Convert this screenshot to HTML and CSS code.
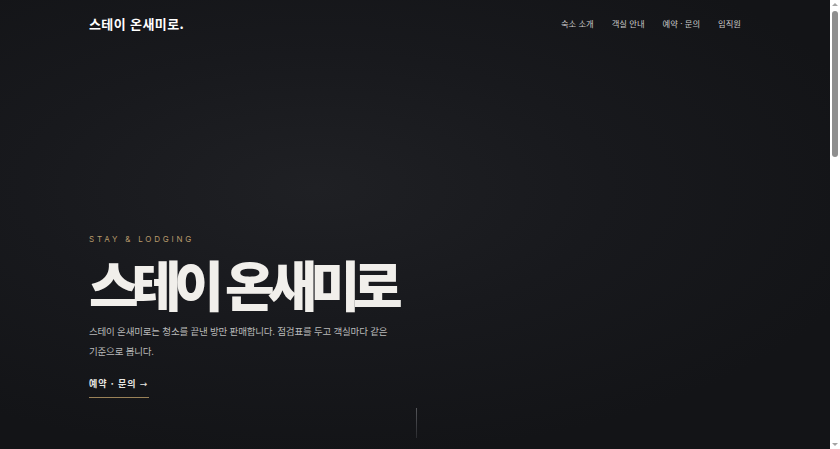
FILE: index.html
```html
<!DOCTYPE html>
<html lang="ko">
<head>
<meta charset="utf-8">
<title>스테이 온새미로</title>
<link rel="stylesheet" href="styles.css">
</head>
<body>
<div class="frame">
<main class="page">
<section class="hero">
  <header class="header">
    <a class="logo" href="#">스테이 온새미로.</a>
    <nav class="nav">
      <a href="#">숙소 소개</a>
      <a href="#">객실 안내</a>
      <a href="#">예약 · 문의</a>
      <a href="#">임직원</a>
    </nav>
  </header>
  <div class="hero-body">
    <p class="eyebrow">STAY &amp; LODGING</p>
    <h1 class="title">스테이 온새미로</h1>
    <p class="lead">스테이 온새미로는 청소를 끝낸 방만 판매합니다. 점검표를 두고 객실마다 같은<br>기준으로 봅니다.</p>
    <a class="cta" href="#">예약 · 문의 <span class="arrow">→</span></a>
  </div>
  <div class="scroll-line"></div>
</section>
<section class="more"></section>
</main>
<div class="scrollbar" aria-hidden="true">
  <span class="sb-arrow sb-up"></span>
  <span class="sb-track"><span class="sb-thumb"></span></span>
  <span class="sb-arrow sb-down"></span>
</div>
</div>
</body>
</html>
```
FILE: styles.css
```css
html, body {
  margin: 0;
  padding: 0;
  height: 100%;
  overflow: hidden;
  background: #141519;
}
body {
  font-family: "Noto Sans CJK KR", "Noto Sans", sans-serif;
  color: #f2f0ec;
}
a { text-decoration: none; color: inherit; }

.frame {
  display: flex;
  height: 100vh;
}
.page {
  flex: 1;
  height: 100vh;
  overflow: hidden;
}
.hero {
  position: relative;
  height: 449px;
  box-sizing: border-box;
  padding: 0 89px;
  display: flex;
  flex-direction: column;
  background: radial-gradient(ellipse 70% 60% at 38% 42%, #1f2024 0%, #18191d 50%, #131417 100%);
}
.header {
  display: flex;
  justify-content: space-between;
  align-items: center;
  height: 46px;
}
.logo {
  font-size: 13px;
  font-weight: 700;
  letter-spacing: 0.03em;
  color: #ffffff;
}
.nav {
  display: flex;
  gap: 18px;
}
.nav a {
  font-size: 8.3px;
  color: #c9c9c9;
}
.hero-body {
  margin-top: 187px;
}
.eyebrow {
  margin: 0;
  font-family: "Inter", "Noto Sans", sans-serif;
  font-size: 8px;
  letter-spacing: 0.35em;
  color: #b89a6c;
  line-height: 12px;
}
.title {
  margin: 11px 0 0;
  font-size: 54px;
  font-weight: 900;
  letter-spacing: -0.13em;
  line-height: 56px;
  color: #f1efeb;
}
.lead {
  margin: 9px 0 0;
  font-size: 9.5px;
  letter-spacing: -0.02em;
  line-height: 20px;
  color: #b9b9b9;
}
.cta {
  display: inline-block;
  margin-top: 16px;
  font-size: 9px;
  font-weight: 700;
  letter-spacing: 0.1em;
  color: #e8e6e2;
  padding-bottom: 7px;
  border-bottom: 1.5px solid #9a8258;
  width: 60px;
  white-space: nowrap;
}
.arrow { font-family: "DejaVu Sans", sans-serif; font-weight: 400; }
.scroll-line {
  position: absolute;
  left: 416px;
  top: 408px;
  width: 1px;
  height: 30px;
  background: linear-gradient(#55565a, #2a2b2f);
}
.more {
  height: 860px;
  background: #141519;
}

.scrollbar {
  width: 10px;
  flex: none;
  background: #ffffff;
  display: flex;
  flex-direction: column;
  align-items: center;
}
.sb-arrow {
  width: 0;
  height: 0;
  border-left: 3px solid transparent;
  border-right: 3px solid transparent;
  margin: 3px 0;
}
.sb-up { border-bottom: 3px solid #a3a3a3; }
.sb-down { border-top: 3px solid #a3a3a3; }
.sb-track {
  flex: 1;
  width: 100%;
  display: flex;
  justify-content: center;
  padding-top: 2px;
}
.sb-thumb {
  width: 6px;
  height: 146px;
  border-radius: 3px;
  background: #8f8f8f;
}
```
